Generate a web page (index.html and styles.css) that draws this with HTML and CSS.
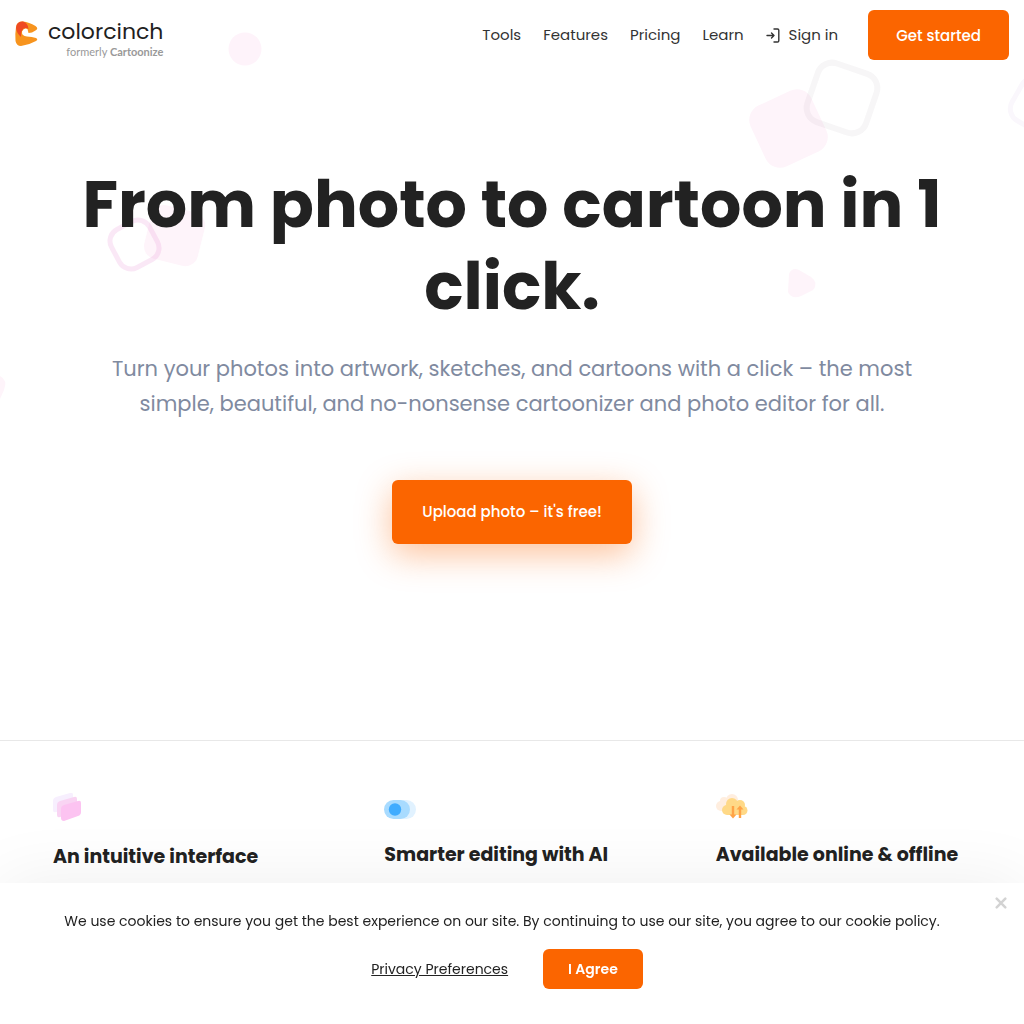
FILE: index.html
```html
<!DOCTYPE html>
<html lang="en">
<head>
<meta charset="utf-8">
<meta name="viewport" content="width=device-width, initial-scale=1">
<title>Colorcinch</title>
<link rel="stylesheet" href="styles.css">
</head>
<body>
<div class="top">
  <svg class="shapes" width="1024" height="740" viewBox="0 0 1024 740" aria-hidden="true">
    <circle cx="245" cy="49" r="16.500" fill="#fef3fa"/>
    <rect x="755" y="95" width="67" height="67" rx="16" fill="#fef4fa" transform="rotate(-25 788.500 128.500)"/>
    <rect x="811" y="67" width="62" height="62" rx="15" fill="none" stroke="#3c1e3c" stroke-opacity=".04" stroke-width="6" transform="rotate(19 842 98)"/>
    <rect x="1014" y="81" width="48" height="48" rx="14" fill="none" stroke="#faf7fc" stroke-width="5" transform="rotate(30 1038 105)"/>
    <rect x="147" y="208" width="55" height="55" rx="13" fill="#fef4fa" transform="rotate(14 174 236)"/>
    <rect x="113" y="223" width="43" height="43" rx="13" fill="none" stroke="#e68ad2" stroke-opacity=".2" stroke-width="5" transform="rotate(-28 134.500 244.500)"/>
    <path d="M789 274q3-7 10-4l12 7q8 6 2 13l-12 6q-9 4-13-4z" fill="#fef4fa"/>
    <path d="M0 376q8 4 4 14l-4 9z" fill="#fef4fa"/>
  </svg>
  <header class="header">
    <a class="logo" href="#" aria-label="Colorcinch, formerly Cartoonize">
      <svg class="logo-mark" width="24" height="26" viewBox="0 0 24 26" aria-hidden="true">
        <path d="M1 6Q2 0 8 .500Q14 1 20.500 5Q24 7.500 20.500 9.500Q17 12 13.500 12L12.500 8Q9 6.500 7 10.500Q6.500 15 12 15.500Q17 15.500 21 17Q23.500 18.500 21 20Q14 24 6 25Q1.500 25 .500 20Q0 12 1 6z" fill="#f7941e"/>
        <path d="M1 7Q1.500 0 8 .500Q13 2 13.500 8Q9.500 5.500 7 9.500Q5.500 12 6 16Q1.500 12 1 7z" fill="#ef4a23"/>
      </svg>
      <span class="logo-text"><span class="logo-name">colorcinch</span><span class="logo-sub">formerly <b>Cartoonize</b></span></span>
    </a>
    <nav class="nav">
      <a href="#">Tools</a>
      <a href="#">Features</a>
      <a href="#">Pricing</a>
      <a href="#">Learn</a>
      <a class="signin" href="#"><svg width="14" height="16" viewBox="0 0 14 16" fill="none" stroke="#333" stroke-width="1.400" stroke-linecap="round" stroke-linejoin="round" aria-hidden="true"><path d="M1 8.500h7M5.500 6l2.500 2.500-2.500 2.500M8 2h3.500q1.300 0 1.300 1.300v10.400q0 1.300-1.300 1.300H8"/></svg>Sign in</a>
    </nav>
    <button class="btn btn-start" type="button">Get started</button>
  </header>
  <main class="hero">
    <h1>From photo to cartoon in 1 click.</h1>
    <p>Turn your photos into artwork, sketches, and cartoons with a click – the most simple, beautiful, and no-nonsense cartoonizer and photo editor for all.</p>
    <button class="btn btn-upload" type="button">Upload photo – it's free!</button>
  </main>
</div>
<section class="features">
  <article class="feature">
    <svg width="32" height="34" viewBox="0 0 32 34" aria-hidden="true">
      <path d="M0 8q0-3 3-4L17 0q3-1 3 2v13L3 19q-3 1-3-2z" fill="#f7effe"/>
      <path d="M4 12q0-3 3-4l14-4q3-1 3 2v13L7 24q-3 1-3-2z" fill="#f9d4f3"/>
      <path d="M8 16q0-3 3-4l14-4q3-1 3 2v9q0 3-3 4l-14 5q-3 0-3-3z" fill="#fcc3f1"/>
    </svg>
    <h2>An intuitive interface</h2>
  </article>
  <article class="feature">
    <svg width="32" height="32" viewBox="0 0 32 32" aria-hidden="true">
      <rect x="6" y="7" width="26" height="19" rx="9.500" fill="#e1f2ff"/>
      <rect x="0" y="7" width="26" height="19" rx="9.500" fill="#a8dbff"/>
      <circle cx="11" cy="16.500" r="6.200" fill="#40acff"/>
    </svg>
    <h2>Smarter editing with AI</h2>
  </article>
  <article class="feature">
    <svg width="32" height="32" viewBox="0 0 32 32" aria-hidden="true">
      <g fill="#ffeedf"><circle cx="5" cy="13" r="5"/><circle cx="8" cy="8" r="4"/><circle cx="16" cy="7" r="6"/><path d="M5 8h18v10H5z"/></g>
      <g fill="#ffd987"><circle cx="11" cy="17" r="5"/><circle cx="16" cy="11" r="6"/><circle cx="24" cy="12" r="5"/><circle cx="27" cy="17.500" r="4.500"/><path d="M11 12h16v10H11z"/></g>
      <path d="M17 13v10M24 25V15" stroke="#ffa347" stroke-width="2.400" fill="none"/>
      <path d="M13.500 21.500h7L17 25.500zM20.500 16.500h7L24 12.500z" fill="#ffa347"/>
    </svg>
    <h2>Available online &amp; offline</h2>
  </article>
</section>
<aside class="cookies" aria-label="Cookie notice">
  <button class="close" type="button" aria-label="Close"><svg width="12" height="12" viewBox="0 0 12 12" stroke="#d3d3d3" stroke-width="2.500" stroke-linecap="round" aria-hidden="true"><path d="M1.700 1.700l8.600 8.600M10.300 1.700l-8.600 8.600"/></svg></button>
  <p>We use cookies to ensure you get the best experience on our site. By continuing to use our site, you agree to our cookie policy.</p>
  <div class="cookie-actions">
    <a href="#">Privacy Preferences</a>
    <button class="btn btn-agree" type="button">I Agree</button>
  </div>
</aside>
</body>
</html>
```

FILE: styles.css
```css
* { box-sizing: border-box; }
body {
  margin: 0;
  background: #fff;
  color: #222;
  font-family: Poppins, Inter, sans-serif;
}
h1, h2, p { margin: 0; }
a { color: inherit; text-decoration: none; }
svg { display: block; }

.btn {
  border: 0;
  border-radius: 6px;
  background: #fb6500;
  color: #fff;
  font-family: inherit;
  font-size: 15px;
  font-weight: 500;
  cursor: pointer;
}

.top {
  position: relative;
  overflow: hidden;
  min-height: 741px;
  border-bottom: 1px solid #e8e8e8;
}
.shapes { position: absolute; top: 0; left: 0; }

.header {
  position: relative;
  display: flex;
  align-items: center;
  padding: 10px 15px;
}
.logo {
  display: flex;
  gap: 9px;
  margin-right: auto;
  padding-top: 6px;
}
.logo-mark { margin-top: 3px; }
.logo-text { display: flex; flex-direction: column; align-items: flex-end; }
.logo-name {
  font-size: 22px;
  line-height: 28px;
  color: #1f1f1f;
}
.logo-sub { font: 400 11px/12px Lato, sans-serif; color: #999; }
.nav {
  display: flex;
  align-items: center;
  gap: 22px;
  color: #333;
  font-size: 15px;
  line-height: 24px;
}
.signin { display: flex; align-items: center; gap: 9px; }
.btn-start { height: 50px; padding: 0 28px; margin-left: 30px; }

.hero {
  position: relative;
  display: flex;
  flex-direction: column;
  align-items: center;
  padding: 94px 60px 0;
  text-align: center;
}
.hero h1 {
  max-width: 900px;
  font-size: 65px;
  line-height: 82px;
  font-weight: 700;
}
.hero p {
  max-width: 820px;
  margin-top: 23px;
  color: #808a9f;
  font-size: 21px;
  line-height: 35px;
}
.btn-upload {
  height: 64px;
  padding: 0 30px 2px;
  margin-top: 59px;
  box-shadow: 0 10px 35px rgba(251, 101, 0, .4);
}

.features {
  display: grid;
  grid-template-columns: repeat(3, 1fr);
  padding: 52px 15px 0;
}
.feature { padding: 0 0 0 38px; }
.feature h2 {
  margin-top: 15px;
  font-size: 19px;
  line-height: 30px;
  font-weight: 700;
}

.cookies {
  position: fixed;
  right: 0;
  bottom: 0;
  left: 0;
  padding: 26px 30px 35px;
  background: #fff;
  box-shadow: 0 0 70px rgba(0, 0, 0, .07);
  font-size: 14px;
  line-height: 24px;
  text-align: center;
}
.cookies p { padding-right: 20px; }
.cookie-actions {
  display: flex;
  align-items: center;
  justify-content: center;
  gap: 35px;
  margin-top: 16px;
  padding-right: 10px;
}
.cookie-actions a { text-decoration: underline; }
.btn-agree { height: 40px; padding: 0 25px; font-size: 14px; font-weight: 600; }
.close {
  position: absolute;
  top: 14px;
  right: 17px;
  padding: 0;
  border: 0;
  background: none;
  cursor: pointer;
}
```
